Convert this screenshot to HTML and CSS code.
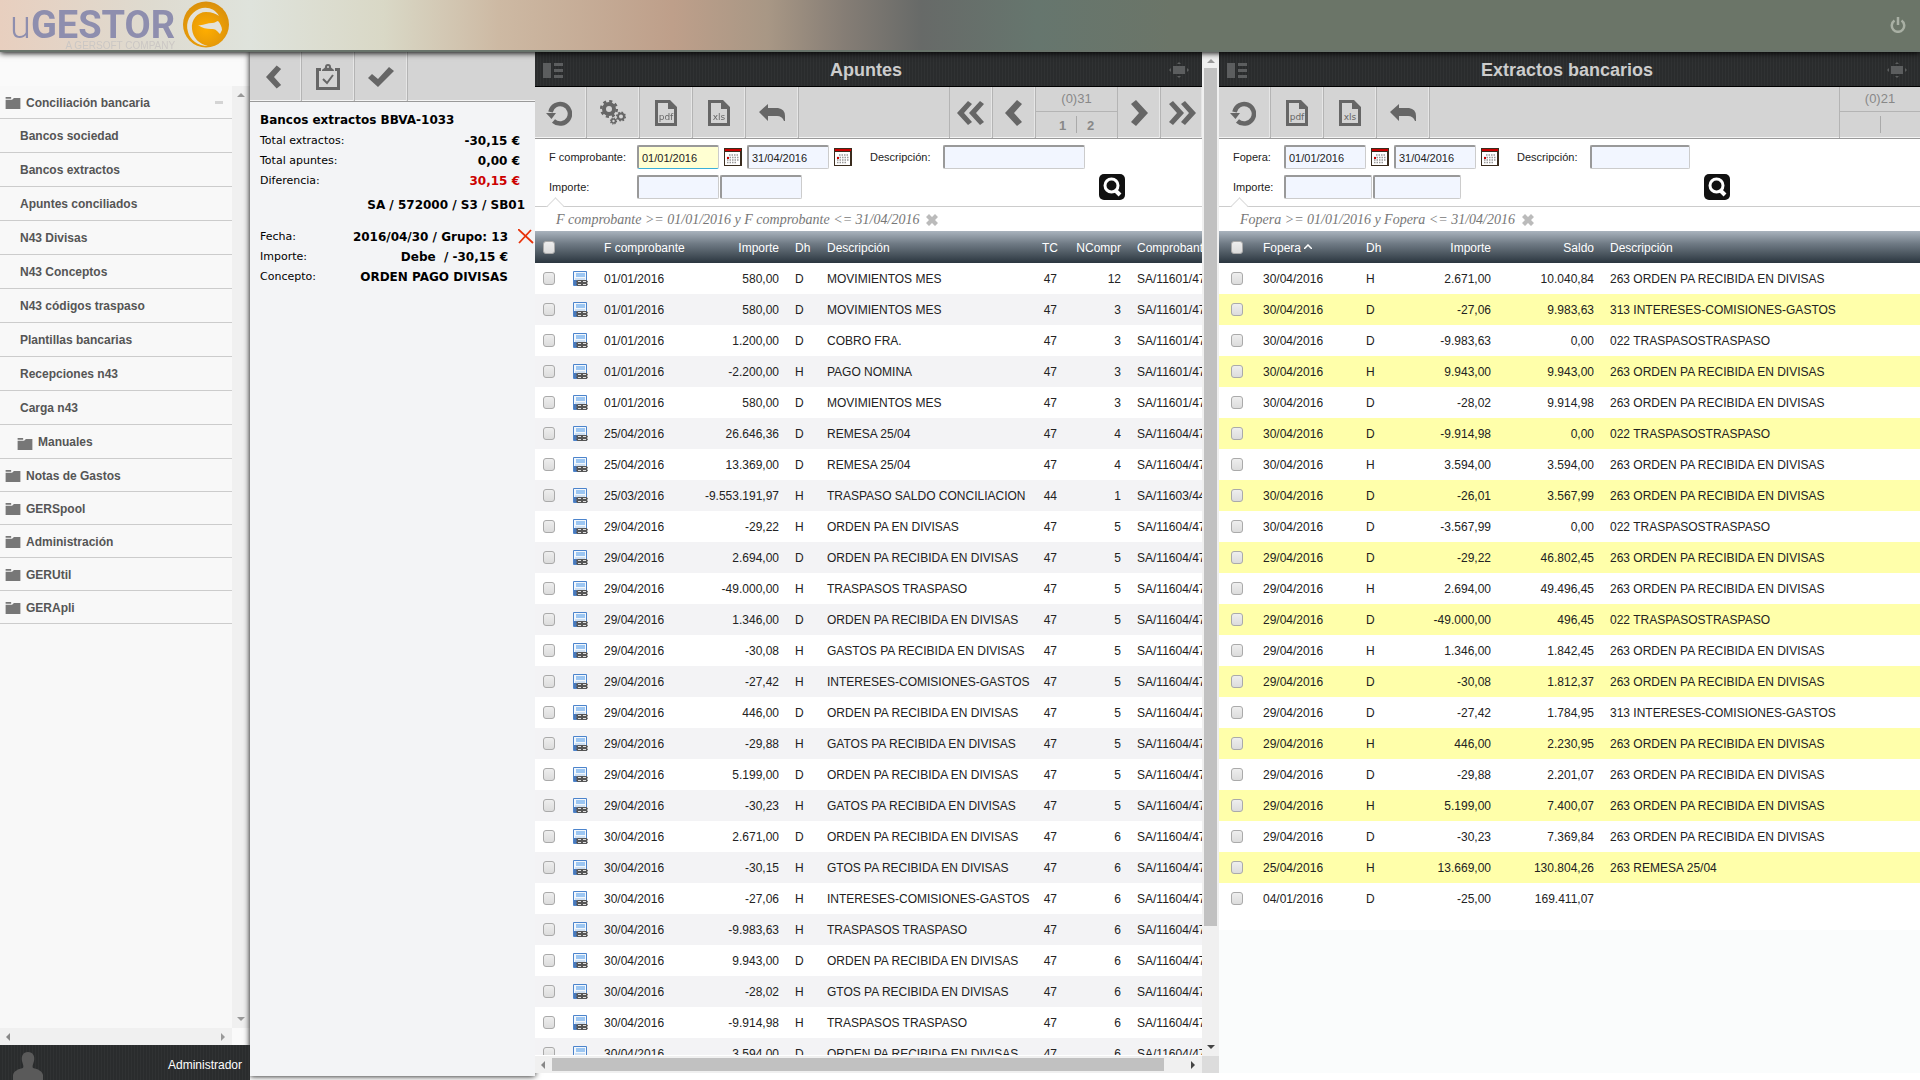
FILE: index.html
```html
<!DOCTYPE html>
<html lang="es">
<head>
    <meta charset="UTF-8">
    <meta name="viewport" content="width=device-width, initial-scale=1.0">
    <title>uGESTOR</title>
    <link rel="stylesheet" href="styles.css">
</head>
<body>
    <svg class="sprite" aria-hidden="true">
        <symbol id="i-folder" viewBox="0 0 16 13"><path d="M0 0h6v2H0zM0 3h7l2-2h7v12H0z"/></symbol>
        <symbol id="i-left" viewBox="0 0 18 26"><path d="M12 0l5 4-8 9 8 9-5 4L0 13z"/></symbol>
        <symbol id="i-right" viewBox="0 0 18 26"><path d="M6 0L1 4l8 9-8 9 5 4 12-13z"/></symbol>
        <symbol id="i-first" viewBox="0 0 28 26"><path d="M11 1l4 3-8 9 8 9-4 3L0 13zM23 1l4 3-8 9 8 9-4 3-11-12z"/></symbol>
        <symbol id="i-last" viewBox="0 0 28 26"><path d="M5 1L1 4l8 9-8 9 4 3 11-12zM17 1l-4 3 8 9-8 9 4 3 11-12z"/></symbol>
        <symbol id="i-clip" viewBox="0 0 24 26"><path d="M0 4h5v3H3v16h18V7h-2V4h5v22H0zM6 7c0-3 3-2 3-4a3 3 0 0 1 6 0c0 2 3 1 3 4zM11 3a1 1 0 0 0 2 0 1 1 0 0 0-2 0z" fill-rule="evenodd"/><path d="M7 15l4 4 6-8" fill="none" stroke="#666" stroke-width="2"/></symbol>
        <symbol id="i-check" viewBox="0 0 26 20"><path d="M0 11l4-4 6 5L21 0l5 4-16 16z"/></symbol>
        <symbol id="i-refresh" viewBox="0 0 26 26"><path d="M7.500 21A9.800 9.800 0 1 0 4.500 12" fill="none" stroke="#666" stroke-width="4.500"/><path d="M0 13h10l-4.500 6z"/></symbol>
        <symbol id="i-gears" viewBox="0 0 26 26">
            <circle cx="9" cy="9" r="5" fill="none" stroke="#666" stroke-width="4"/>
            <circle cx="9" cy="9" r="7.800" fill="none" stroke="#666" stroke-width="2.500" stroke-dasharray="3.100 3.020"/>
            <circle cx="21" cy="16.500" r="3" fill="none" stroke="#666" stroke-width="2"/>
            <circle cx="21" cy="16.500" r="4.300" fill="none" stroke="#666" stroke-width="1.500" stroke-dasharray="1.700 1.670"/>
            <circle cx="13.500" cy="21" r="2" fill="none" stroke="#666" stroke-width="1.600"/>
            <circle cx="13.500" cy="21" r="3" fill="none" stroke="#666" stroke-width="1.200" stroke-dasharray="1.200 1.150"/>
        </symbol>
        <symbol id="i-page" viewBox="0 0 22 26"><path d="M0 0h15l7 7v19H0zM3 3v20h16V9h-6V3z" fill-rule="evenodd"/></symbol>
        <symbol id="i-back" viewBox="0 0 26 17"><path d="M0 8l9-8v4h10q7 1 7 8v5h-1q-2-5-7-5H9v5z"/></symbol>
        <symbol id="i-layout" viewBox="0 0 20 15"><path d="M0 0h8v15H0zM11 0h9v3h-9zM11 6h9v3h-9zM11 12h9v3h-9z"/></symbol>
        <symbol id="i-expand" viewBox="0 0 20 16"><path d="M4 4h12v8H4zM8 2l2-2 2 2zM8 14l2 2 2-2zM2 6L0 8l2 2zM18 6l2 2-2 2z"/></symbol>
        <symbol id="i-cal" viewBox="0 0 18 18"><path d="M0 0h18v18H0z" fill="#3a2c1e"/><path d="M1 1h16v2H1z" fill="#c00"/><path d="M1 4h15v13H1z" fill="#fff"/><path d="M5 7h10M3 9.500h12M3 12h12M3 14.500h10" stroke="#999" stroke-width="1.500" stroke-dasharray="1.500 1"/><path d="M3 9h2v2H3z" fill="#c00"/></symbol>
        <symbol id="i-search" viewBox="0 0 26 26"><rect width="26" height="26" rx="5" fill="#111"/><circle cx="12.500" cy="11.500" r="6.500" fill="none" stroke="#fff" stroke-width="3"/><path d="M16 16l5 5" stroke="#fff" stroke-width="4"/></symbol>
        <symbol id="i-x" viewBox="0 0 12 12"><path d="M3 0l3 3 3-3 3 3-3 3 3 3-3 3-3-3-3 3-3-3 3-3-3-3z"/></symbol>
        <symbol id="i-doc" viewBox="0 0 15 16"><path d="M.500.500h13v14H.500z" fill="#f2f7fc" stroke="#4c84cc"/><path d="M3 2h9v4H3z" fill="#9cc6f2"/><path d="M2 8h10" stroke="#a9c8ea"/><path d="M1 9h3v5H1z" fill="#4a78b8"/><path d="M7 9h6.500l1.500 1.500-1 1.500 1 1.500-1.500 1.500H4.500L3 13.500 4 12l-1-1.500L4.500 9z" fill="#555"/><path d="M5 10.500h3M10 10.500h3M5 13.500h3M10 13.500h3" stroke="#ddd" stroke-width="1.200"/></symbol>
    </svg>

    <header class="top">
        <div class="logo">
            <div class="logo-text">
                <div class="logo-name"><span>u</span>GESTOR</div>
                <div class="logo-sub">A GERSOFT COMPANY</div>
            </div>
            <svg class="logo-mark" viewBox="0 0 46 47">
                <defs><radialGradient id="gold" cx=".5" cy=".6" r=".6"><stop offset="0" stop-color="#ffae00"/><stop offset="1" stop-color="#d98f0c"/></radialGradient></defs>
                <circle cx="23" cy="23.500" r="23" fill="url(#gold)"/>
                <path d="M36 15C32 7 23 5 16 8 7 12 2 21 5 31c2 8 10 14 20 14-9-2-15-8-16-17C8 19 14 11 23 11c6 0 10 2 13 4z" fill="#e4e2da"/>
                <path d="M15 24c5 1 9-2 14-2 3 0 5-2 6-2 2 2 4 6 4 9l-2 4-3-3c-2-2-4-2-6-2-4 0-9-1-13-4z" fill="#e4e2da"/>
            </svg>
        </div>
        <button class="power" aria-label="Salir">
            <svg width="16" height="16" viewBox="0 0 16 16"><path d="M4.500 3.500a6.200 6.200 0 1 0 7 0M8 0v8" fill="none" stroke="#a9b0a4" stroke-width="2.500"/></svg>
        </button>
    </header>

    <div class="main">
        <aside class="sidebar">
            <div class="menu-area">
                <nav class="menu">
                    <a class="item open" href="#"><svg><use href="#i-folder"/></svg>Conciliación bancaria<i></i></a>
                    <a class="item sub" href="#">Bancos sociedad</a>
                    <a class="item sub" href="#">Bancos extractos</a>
                    <a class="item sub" href="#">Apuntes conciliados</a>
                    <a class="item sub" href="#">N43 Divisas</a>
                    <a class="item sub" href="#">N43 Conceptos</a>
                    <a class="item sub" href="#">N43 códigos traspaso</a>
                    <a class="item sub" href="#">Plantillas bancarias</a>
                    <a class="item sub" href="#">Recepciones n43</a>
                    <a class="item sub" href="#">Carga n43</a>
                    <a class="item sub folder" href="#"><svg><use href="#i-folder"/></svg>Manuales</a>
                    <a class="item" href="#"><svg><use href="#i-folder"/></svg>Notas de Gastos</a>
                    <a class="item" href="#"><svg><use href="#i-folder"/></svg>GERSpool</a>
                    <a class="item" href="#"><svg><use href="#i-folder"/></svg>Administración</a>
                    <a class="item" href="#"><svg><use href="#i-folder"/></svg>GERUtil</a>
                    <a class="item" href="#"><svg><use href="#i-folder"/></svg>GERApli</a>
                </nav>
                <div class="vbar light"><b class="up"></b><b class="down"></b></div>
            </div>
            <div class="hbar light"><b class="prev"></b><b class="next"></b></div>
            <div class="user">
                <svg width="30" height="28" viewBox="0 0 30 28"><path d="M15 0c5 0 7 4 6 9-1 4-2 5-1 7 5 1 9 3 10 7v5H0v-5c1-4 5-6 10-7 1-2 0-3-1-7-1-5 1-9 6-9z" fill="#5a5a5a"/></svg>
                <span>Administrador</span>
            </div>
        </aside>

        <section class="summary">
            <div class="toolbar">
                <button aria-label="Volver"><svg width="16" height="26"><use href="#i-left"/></svg></button>
                <button aria-label="Conciliar"><svg width="24" height="26"><use href="#i-clip"/></svg></button>
                <button aria-label="Aceptar"><svg width="26" height="20"><use href="#i-check"/></svg></button>
            </div>
            <div class="summary-body">
                <h2>Bancos extractos BBVA-1033</h2>
                <dl class="totals">
                    <dt>Total extractos:</dt><dd>-30,15 €</dd>
                    <dt>Total apuntes:</dt><dd>0,00 €</dd>
                    <dt>Diferencia:</dt><dd class="diff">30,15 €</dd>
                </dl>
                <p class="account">SA / 572000 / S3 / SB01</p>
                <div class="group">
                    <dl>
                        <dt>Fecha:</dt><dd>2016/04/30 / Grupo: 13</dd>
                        <dt>Importe:</dt><dd>Debe &nbsp;/ -30,15 €</dd>
                        <dt>Concepto:</dt><dd>ORDEN PAGO DIVISAS</dd>
                    </dl>
                    <button class="remove" aria-label="Quitar"><svg width="16" height="15" viewBox="0 0 16 15"><path d="M0 0l15 14M13 1L1 14" stroke="#e8320a" stroke-width="1.800"/></svg></button>
                </div>
            </div>
        </section>

        <section class="panel apuntes">
            <div class="panel-main">
                <div class="title"><svg width="20" height="15"><use href="#i-layout"/></svg><h1>Apuntes</h1><svg width="20" height="16"><use href="#i-expand"/></svg></div>
                <div class="toolbar">
                    <button aria-label="Refrescar"><svg width="26" height="26"><use href="#i-refresh"/></svg></button>
                    <button aria-label="Procesos"><svg width="26" height="26"><use href="#i-gears"/></svg></button>
                    <button class="file"><svg width="22" height="26"><use href="#i-page"/></svg><span>pdf</span></button>
                    <button class="file"><svg width="22" height="26"><use href="#i-page"/></svg><span>xls</span></button>
                    <button aria-label="Deshacer"><svg width="26" height="17"><use href="#i-back"/></svg></button>
                    <div class="pager">
                        <button aria-label="Primera"><svg width="28" height="26"><use href="#i-first"/></svg></button>
                        <button aria-label="Anterior"><svg width="18" height="26"><use href="#i-left"/></svg></button>
                        <div class="pages"><div>(0)31</div><div class="nums"><a href="#">1</a><a href="#">2</a></div></div>
                        <button aria-label="Siguiente"><svg width="18" height="26"><use href="#i-right"/></svg></button>
                        <button aria-label="Última"><svg width="28" height="26"><use href="#i-last"/></svg></button>
                    </div>
                </div>
                <form class="filters">
                    <label for="a-desde">F comprobante:</label>
                    <div class="fields">
                        <input class="date active" id="a-desde" value="01/01/2016">
                        <button type="button" aria-label="Calendario"><svg width="18" height="18"><use href="#i-cal"/></svg></button>
                        <input class="date" aria-label="F comprobante hasta" value="31/04/2016">
                        <button type="button" aria-label="Calendario"><svg width="18" height="18"><use href="#i-cal"/></svg></button>
                    </div>
                    <label for="a-desc">Descripción:</label>
                    <input class="desc" id="a-desc">
                    <label class="row2" for="a-imp">Importe:</label>
                    <div class="fields amounts"><input id="a-imp"><input aria-label="Importe hasta"></div>
                    <button class="search" type="button" aria-label="Buscar"><svg width="26" height="26"><use href="#i-search"/></svg></button>
                </form>
                <div class="criteria">F comprobante &gt;= 01/01/2016 y F comprobante &lt;= 31/04/2016<button aria-label="Quitar filtro"><svg width="12" height="12"><use href="#i-x"/></svg></button></div>
                <div class="grid">
                    <table>
                        <colgroup><col class="c-check"><col class="c-icon"><col class="c-date"><col class="c-imp"><col class="c-dh"><col class="c-desc"><col class="c-tc"><col class="c-num"><col></colgroup>
                        <thead><tr>
                            <th><input type="checkbox" aria-label="Todos"></th><th></th><th>F comprobante</th><th class="r">Importe</th><th>Dh</th><th>Descripción</th><th class="r">TC</th><th class="r">NCompr</th><th>Comprobante</th>
                        </tr></thead>
                        <tbody id="apuntes"></tbody>
                    </table>
                </div>
                <div class="hbar"><b class="prev"></b><div class="thumb"></div><b class="next"></b></div>
            </div>
            <div class="vbar"><b class="up"></b><div class="thumb"></div><b class="down"></b><div class="corner"></div></div>
        </section>

        <section class="panel extractos">
            <div class="title"><svg width="20" height="15"><use href="#i-layout"/></svg><h1>Extractos bancarios</h1><svg width="20" height="16"><use href="#i-expand"/></svg></div>
            <div class="toolbar">
                <button aria-label="Refrescar"><svg width="26" height="26"><use href="#i-refresh"/></svg></button>
                <button class="file"><svg width="22" height="26"><use href="#i-page"/></svg><span>pdf</span></button>
                <button class="file"><svg width="22" height="26"><use href="#i-page"/></svg><span>xls</span></button>
                <button aria-label="Deshacer"><svg width="26" height="17"><use href="#i-back"/></svg></button>
                <div class="pager">
                    <div class="pages"><div>(0)21</div><div class="nums"><a href="#"></a><a href="#"></a></div></div>
                </div>
            </div>
            <form class="filters">
                <label for="e-desde">Fopera:</label>
                <div class="fields">
                    <input class="date" id="e-desde" value="01/01/2016">
                    <button type="button" aria-label="Calendario"><svg width="18" height="18"><use href="#i-cal"/></svg></button>
                    <input class="date" aria-label="Fopera hasta" value="31/04/2016">
                    <button type="button" aria-label="Calendario"><svg width="18" height="18"><use href="#i-cal"/></svg></button>
                </div>
                <label for="e-desc">Descripción:</label>
                <input class="desc" id="e-desc">
                <label class="row2" for="e-imp">Importe:</label>
                <div class="fields amounts"><input id="e-imp"><input aria-label="Importe hasta"></div>
                <button class="search" type="button" aria-label="Buscar"><svg width="26" height="26"><use href="#i-search"/></svg></button>
            </form>
            <div class="criteria">Fopera &gt;= 01/01/2016 y Fopera &lt;= 31/04/2016<button aria-label="Quitar filtro"><svg width="12" height="12"><use href="#i-x"/></svg></button></div>
            <div class="grid">
                <div class="table-wrap">
                    <table>
                        <colgroup><col class="c-check"><col class="c-date"><col class="c-dh"><col class="c-imp"><col class="c-saldo"><col></colgroup>
                        <thead><tr>
                            <th><input type="checkbox" aria-label="Todos"></th><th>Fopera <svg class="sort" width="8" height="5" viewBox="0 0 8 5"><path d="M0 5l4-4 4 4" fill="none" stroke="#fff" stroke-width="1.500"/></svg></th><th>Dh</th><th class="r">Importe</th><th class="r">Saldo</th><th>Descripción</th>
                        </tr></thead>
                        <tbody id="extractos"></tbody>
                    </table>
                </div>
            </div>
        </section>
    </div>

    <script src="script.js"></script>
</body>
</html>
```
FILE: styles.css
```css
* {
    box-sizing: border-box;
}
body {
    margin: 0;
    height: 100vh;
    display: flex;
    flex-direction: column;
    overflow: hidden;
    background: #fff;
    color: #222;
    font-family: "Liberation Sans", Arial, sans-serif;
    font-size: 12px;
}
.sprite {
    display: none;
}
svg {
    fill: #666;
    flex: none;
    display: block;
}
button {
    border: 0;
    padding: 0;
    background: none;
    cursor: pointer;
}
a {
    color: inherit;
    text-decoration: none;
}
h1, h2, p, dl, dd {
    margin: 0;
}

/* cabecera */
.top {
    flex: none;
    height: 52px;
    display: flex;
    justify-content: space-between;
    align-items: center;
    padding: 0 14px 0 10px;
    position: relative;
    z-index: 2;
    border-bottom: 2px solid #68736a;
    box-shadow: 0 1px 6px #000;
    background: linear-gradient(to right, #e8cfbf 0%, #dedbd0 8%, #dfe3dc 13%, #d9d8c6 20%, #cdb9a3 26%, #be9f8a 35%, #a89785 40%, #857d75 44%, #676a68 48%, #66766e 54%, #6b7568 61%);
}
.logo {
    display: flex;
    align-items: flex-start;
    gap: 8px;
    height: 50px;
}
.logo-text {
    text-align: right;
    color: #8e8eae;
}
.logo-name {
    font: bold 38px/30px Roboto, sans-serif;
    padding-top: 10px;
}
.logo-name span {
    font-weight: 300;
}
.logo-sub {
    font-size: 10px;
    line-height: 12px;
    color: #cbc7c4;
}
.logo-mark {
    width: 46px;
    height: 47px;
    margin-top: 1px;
}

.main {
    flex: 1;
    min-height: 0;
    display: flex;
}

/* menu lateral */
.sidebar {
    flex: none;
    width: 250px;
    display: flex;
    flex-direction: column;
    background: #fafafa;
    padding-top: 34px;
}
.menu-area {
    flex: 1;
    min-height: 0;
    display: flex;
}
.menu {
    flex: 1;
    background: #f8f8f8;
}
.item {
    display: flex;
    align-items: center;
    gap: 5px;
    height: 33px;
    padding: 1px 9px 0 5px;
    border-bottom: 1px solid #ccc;
    color: #555;
    font-weight: bold;
}
.item svg {
    width: 16px;
    height: 12px;
    fill: #777;
}
.item i {
    width: 8px;
    height: 3px;
    margin-left: auto;
    background: #d4d4d4;
}
.item.sub {
    height: 34px;
    padding-left: 20px;
}
.item.folder {
    padding-left: 17px;
}
.item.folder svg {
    margin-top: 4px;
}
.user {
    flex: none;
    height: 35px;
    display: flex;
    justify-content: space-between;
    align-items: flex-end;
    padding: 0 8px 0 13px;
    color: #fff;
    position: relative;
    z-index: 1;
}
.user span {
    line-height: 30px;
}
.user, .title {
    background: repeating-linear-gradient(to right, #2a2c2d 0 2px, #303233 2px 3px);
}

/* barras de desplazamiento */
.vbar {
    flex: none;
    width: 17px;
    display: flex;
    flex-direction: column;
    align-items: center;
    background: #f0f0f0;
}
.hbar {
    flex: none;
    height: 17px;
    display: flex;
    align-items: center;
    background: #f0f0f0;
}
.vbar b, .hbar b {
    border: 4px solid transparent;
}
.vbar .up {
    margin: 3px 0 5px;
    border-bottom-color: #999;
}
.vbar .down {
    margin: auto 0 3px;
    border-top-color: #444;
}
.hbar .prev {
    margin: 0 7px 0 2px;
    border-right-color: #888;
}
.hbar .next {
    margin: 0 3px 0 auto;
    border-left-color: #444;
}
.vbar.light {
    width: 18px;
}
.hbar.light {
    margin-right: 18px;
}
.vbar.light .down {
    border-top-color: #999;
}
.hbar.light .next {
    border-left-color: #999;
}
.thumb {
    background: #c1c1c1;
}
.vbar .thumb {
    width: 13px;
    height: 84%;
}
.hbar .thumb {
    width: 612px;
    height: 13px;
}
.corner {
    width: 100%;
    height: 17px;
    background: #dcdcdc;
}

/* barra de botones */
.toolbar {
    flex: none;
    height: 52px;
    display: flex;
    background: #d4d4d4;
    border-bottom: 1px solid #999;
    box-shadow: inset 0 -1px #f4f4f4;
}
.toolbar button {
    width: 53px;
    display: flex;
    justify-content: center;
    align-items: center;
    border-right: 1px solid #b4b4b4;
    box-shadow: inset -1px 0 #e6e6e6;
}
.toolbar button:first-child {
    width: 52px;
    padding-right: 3px;
}
.file {
    position: relative;
}
.file span {
    position: absolute;
    left: 0;
    right: 0;
    top: 25px;
    color: #666;
    font: 9px/10px "DejaVu Sans", sans-serif;
    text-align: center;
}
.pager {
    display: flex;
    margin-left: auto;
    border-left: 1px solid #b4b4b4;
}
.pager button, .pager button:first-child {
    width: 43px;
    padding: 0;
}
.pager button:last-child {
    width: 41px;
    border-right: 0;
}
.pages {
    width: 82px;
    text-align: center;
    color: #888;
    font-size: 13px;
    line-height: 24px;
    border-right: 1px solid #b4b4b4;
}
.nums {
    display: flex;
    height: 26px;
    padding: 4px 13px;
    border-top: 1px solid #b4b4b4;
    font-weight: bold;
    line-height: 20px;
}
.nums a {
    flex: 1;
}
.nums a + a {
    border-left: 1px solid #aaa;
}

/* resumen */
.summary {
    flex: none;
    width: 285px;
    margin-bottom: 4px;
    background: #f3f4f6;
    box-shadow: 0 0 6px #000;
    color: #000;
    font: 11px/20px "DejaVu Sans", Verdana, sans-serif;
}
.summary .toolbar {
    height: 50px;
}
.summary-body {
    padding: 7px 1px 0 10px;
}
.summary h2 {
    font-size: 12px;
    line-height: 22px;
}
.summary dl {
    display: grid;
    grid-template-columns: auto 1fr;
}
.summary dd, .account {
    text-align: right;
    font-size: 12px;
    font-weight: bold;
}
.totals {
    padding-right: 14px;
}
.summary .diff {
    color: #c00;
}
.account {
    padding: 4px 9px 12px 0;
}
.group {
    display: flex;
    align-items: flex-start;
    gap: 10px;
}
.group dl {
    flex: 1;
}
.remove {
    padding-top: 2px;
}

/* paneles */
.panel {
    min-width: 0;
    display: flex;
    margin-bottom: 7px;
}
.apuntes {
    flex: 1 1 684px;
    position: relative;
    z-index: 1;
    background: #fff;
}
.panel-main {
    flex: 1;
    min-width: 0;
    display: flex;
    flex-direction: column;
}
.extractos {
    flex: 1 1 701px;
    flex-direction: column;
    background: #fafcfc;
}
.title {
    flex: none;
    height: 35px;
    display: flex;
    justify-content: space-between;
    align-items: center;
    padding: 2px 13px 0 8px;
    border-bottom: 1px solid #000;
}
.title svg {
    fill: #5c5e5f;
}
.title h1 {
    color: #ccc;
    font-size: 18px;
    line-height: 32px;
}
.filters {
    flex: none;
    display: grid;
    grid-template-columns: 88px 233px 73px 156px 26px;
    grid-auto-rows: 24px;
    row-gap: 6px;
    align-items: center;
    padding: 6px 0 7px 14px;
    background: #fff;
    font-size: 11px;
}
.row2 {
    grid-column: 1;
}
.fields {
    display: flex;
    align-items: center;
    gap: 5px;
}
.amounts {
    gap: 1px;
}
.filters input {
    width: 82px;
    height: 24px;
    padding: 0 3px;
    border: 1px solid #ccc;
    border-width: 2px 1px 1px 2px;
    border-top-color: #999;
    border-left-color: #999;
    border-radius: 2px;
    background: #f2f6ff;
    color: #222;
    font: 11px "Liberation Sans", Arial, sans-serif;
}
.filters input.active {
    background: #ffffd2;
    border-bottom-color: #3ab0d8;
    outline: none;
}
.filters input.desc {
    width: 142px;
}
.filters .search {
    grid-column: 5;
}
.criteria {
    flex: none;
    height: 25px;
    padding: 2px 0 0 21px;
    display: flex;
    align-items: center;
    gap: 7px;
    position: relative;
    border-top: 1px solid #ccc;
    background: #fff;
    color: #777;
    font: italic 14px "Liberation Serif", Georgia, serif;
}
/* pico sobre la linea */
.criteria::before {
    content: "";
    position: absolute;
    left: 14px;
    top: -7px;
    width: 12px;
    height: 12px;
    transform: rotate(45deg);
    background: linear-gradient(135deg, #fff 50%, transparent 50%);
    border: solid #ddd;
    border-width: 1px 0 0 1px;
}
.criteria svg {
    fill: #bbb;
}

/* tablas */
.grid {
    flex: 1;
    min-height: 0;
    overflow: hidden;
}
.apuntes .grid {
    margin-bottom: 1px;
}
table {
    width: 100%;
    table-layout: fixed;
    border-collapse: collapse;
    background: #fff;
}
th, td {
    height: 31px;
    padding: 0 8px;
    overflow: hidden;
    white-space: nowrap;
    text-align: left;
}
th {
    height: 32px;
    padding-top: 1px;
    color: #fff;
    font-weight: normal;
}
thead tr {
    background: linear-gradient(#a9b3bd, #6f7a84 40%, #2b363f);
}
.r {
    text-align: right;
}
th:last-child, td:last-child {
    padding-right: 0;
    text-overflow: clip;
}
.apuntes th:nth-child(8) {
    padding-left: 0;
}
.sort {
    display: inline-block;
    vertical-align: 3px;
}
td input, th input {
    appearance: none;
    display: block;
    width: 12px;
    height: 13px;
    margin: 0;
    border: 1px solid #aaa;
    border-radius: 3px;
    background: linear-gradient(#eee, #dcdcdc);
}
.c-check { width: 30px; }
.c-icon { width: 31px; }
.c-date { width: 100px; }
.c-imp { width: 91px; }
.c-dh { width: 32px; }
.c-desc { width: 215px; }
.c-tc { width: 31px; }
.c-num { width: 64px; }
.c-saldo { width: 103px; }
.apuntes tbody tr:nth-child(even) {
    background: #f3f3f5;
}
.extractos tbody tr:nth-child(even) {
    background: #ffffaa;
}

.extractos .filters {
    grid-template-columns: 51px 233px 73px 114px 26px;
}
.extractos .filters input.desc {
    width: 100px;
}
.extractos .amounts input {
    width: 88px;
}
.extractos .pages {
    width: 80px;
    border-right: 0;
}
.table-wrap {
    padding-bottom: 16px;
    background: #fff;
}
.extractos .c-check { width: 36px; }
.extractos .c-date { width: 103px; }
.extractos .c-dh { width: 50px; }
.extractos td:first-child, .extractos th:first-child {
    padding-left: 12px;
}
```
FILE: script.js
```js
const apuntes = [
    ['01/01/2016', '580,00', 'D', 'MOVIMIENTOS MES', 47, 12, 'SA/11601/47'],
    ['01/01/2016', '580,00', 'D', 'MOVIMIENTOS MES', 47, 3, 'SA/11601/47'],
    ['01/01/2016', '1.200,00', 'D', 'COBRO FRA.', 47, 3, 'SA/11601/47'],
    ['01/01/2016', '-2.200,00', 'H', 'PAGO NOMINA', 47, 3, 'SA/11601/47'],
    ['01/01/2016', '580,00', 'D', 'MOVIMIENTOS MES', 47, 3, 'SA/11601/47'],
    ['25/04/2016', '26.646,36', 'D', 'REMESA 25/04', 47, 4, 'SA/11604/47'],
    ['25/04/2016', '13.369,00', 'D', 'REMESA 25/04', 47, 4, 'SA/11604/47'],
    ['25/03/2016', '-9.553.191,97', 'H', 'TRASPASO SALDO CONCILIACION', 44, 1, 'SA/11603/44'],
    ['29/04/2016', '-29,22', 'H', 'ORDEN PA EN DIVISAS', 47, 5, 'SA/11604/47'],
    ['29/04/2016', '2.694,00', 'D', 'ORDEN PA RECIBIDA EN DIVISAS', 47, 5, 'SA/11604/47'],
    ['29/04/2016', '-49.000,00', 'H', 'TRASPASOS TRASPASO', 47, 5, 'SA/11604/47'],
    ['29/04/2016', '1.346,00', 'D', 'ORDEN PA RECIBIDA EN DIVISAS', 47, 5, 'SA/11604/47'],
    ['29/04/2016', '-30,08', 'H', 'GASTOS PA RECIBIDA EN DIVISAS', 47, 5, 'SA/11604/47'],
    ['29/04/2016', '-27,42', 'H', 'INTERESES-COMISIONES-GASTOS', 47, 5, 'SA/11604/47'],
    ['29/04/2016', '446,00', 'D', 'ORDEN PA RECIBIDA EN DIVISAS', 47, 5, 'SA/11604/47'],
    ['29/04/2016', '-29,88', 'H', 'GATOS PA RECIBIDA EN DIVISAS', 47, 5, 'SA/11604/47'],
    ['29/04/2016', '5.199,00', 'D', 'ORDEN PA RECIBIDA EN DIVISAS', 47, 5, 'SA/11604/47'],
    ['29/04/2016', '-30,23', 'H', 'GATOS PA RECIBIDA EN DIVISAS', 47, 5, 'SA/11604/47'],
    ['30/04/2016', '2.671,00', 'D', 'ORDEN PA RECIBIDA EN DIVISAS', 47, 6, 'SA/11604/47'],
    ['30/04/2016', '-30,15', 'H', 'GTOS PA RECIBIDA EN DIVISAS', 47, 6, 'SA/11604/47'],
    ['30/04/2016', '-27,06', 'H', 'INTERESES-COMISIONES-GASTOS', 47, 6, 'SA/11604/47'],
    ['30/04/2016', '-9.983,63', 'H', 'TRASPASOS TRASPASO', 47, 6, 'SA/11604/47'],
    ['30/04/2016', '9.943,00', 'D', 'ORDEN PA RECIBIDA EN DIVISAS', 47, 6, 'SA/11604/47'],
    ['30/04/2016', '-28,02', 'H', 'GTOS PA RECIBIDA EN DIVISAS', 47, 6, 'SA/11604/47'],
    ['30/04/2016', '-9.914,98', 'H', 'TRASPASOS TRASPASO', 47, 6, 'SA/11604/47'],
    ['30/04/2016', '3.594,00', 'D', 'ORDEN PA RECIBIDA EN DIVISAS', 47, 6, 'SA/11604/47']
];

const extractos = [
    ['30/04/2016', 'H', '2.671,00', '10.040,84', '263 ORDEN PA RECIBIDA EN DIVISAS'],
    ['30/04/2016', 'D', '-27,06', '9.983,63', '313 INTERESES-COMISIONES-GASTOS'],
    ['30/04/2016', 'D', '-9.983,63', '0,00', '022 TRASPASOSTRASPASO'],
    ['30/04/2016', 'H', '9.943,00', '9.943,00', '263 ORDEN PA RECIBIDA EN DIVISAS'],
    ['30/04/2016', 'D', '-28,02', '9.914,98', '263 ORDEN PA RECIBIDA EN DIVISAS'],
    ['30/04/2016', 'D', '-9.914,98', '0,00', '022 TRASPASOSTRASPASO'],
    ['30/04/2016', 'H', '3.594,00', '3.594,00', '263 ORDEN PA RECIBIDA EN DIVISAS'],
    ['30/04/2016', 'D', '-26,01', '3.567,99', '263 ORDEN PA RECIBIDA EN DIVISAS'],
    ['30/04/2016', 'D', '-3.567,99', '0,00', '022 TRASPASOSTRASPASO'],
    ['29/04/2016', 'D', '-29,22', '46.802,45', '263 ORDEN PA RECIBIDA EN DIVISAS'],
    ['29/04/2016', 'H', '2.694,00', '49.496,45', '263 ORDEN PA RECIBIDA EN DIVISAS'],
    ['29/04/2016', 'D', '-49.000,00', '496,45', '022 TRASPASOSTRASPASO'],
    ['29/04/2016', 'H', '1.346,00', '1.842,45', '263 ORDEN PA RECIBIDA EN DIVISAS'],
    ['29/04/2016', 'D', '-30,08', '1.812,37', '263 ORDEN PA RECIBIDA EN DIVISAS'],
    ['29/04/2016', 'D', '-27,42', '1.784,95', '313 INTERESES-COMISIONES-GASTOS'],
    ['29/04/2016', 'H', '446,00', '2.230,95', '263 ORDEN PA RECIBIDA EN DIVISAS'],
    ['29/04/2016', 'D', '-29,88', '2.201,07', '263 ORDEN PA RECIBIDA EN DIVISAS'],
    ['29/04/2016', 'H', '5.199,00', '7.400,07', '263 ORDEN PA RECIBIDA EN DIVISAS'],
    ['29/04/2016', 'D', '-30,23', '7.369,84', '263 ORDEN PA RECIBIDA EN DIVISAS'],
    ['25/04/2016', 'H', '13.669,00', '130.804,26', '263 REMESA 25/04'],
    ['04/01/2016', 'D', '-25,00', '169.411,07', '']
];

const check = '<td><input type="checkbox" aria-label="Seleccionar"></td>';

document.getElementById('apuntes').innerHTML = apuntes.map(r => `<tr>${check}
    <td><svg width="15" height="16"><use href="#i-doc"/></svg></td>
    <td>${r[0]}</td><td class="r">${r[1]}</td><td>${r[2]}</td><td>${r[3]}</td>
    <td class="r">${r[4]}</td><td class="r">${r[5]}</td><td>${r[6]}</td></tr>`).join('');

document.getElementById('extractos').innerHTML = extractos.map(r => `<tr>${check}
    <td>${r[0]}</td><td>${r[1]}</td><td class="r">${r[2]}</td><td class="r">${r[3]}</td>
    <td>${r[4]}</td></tr>`).join('');

const desde = document.getElementById('a-desde');
desde.focus();
desde.setSelectionRange(0, 0);
```
